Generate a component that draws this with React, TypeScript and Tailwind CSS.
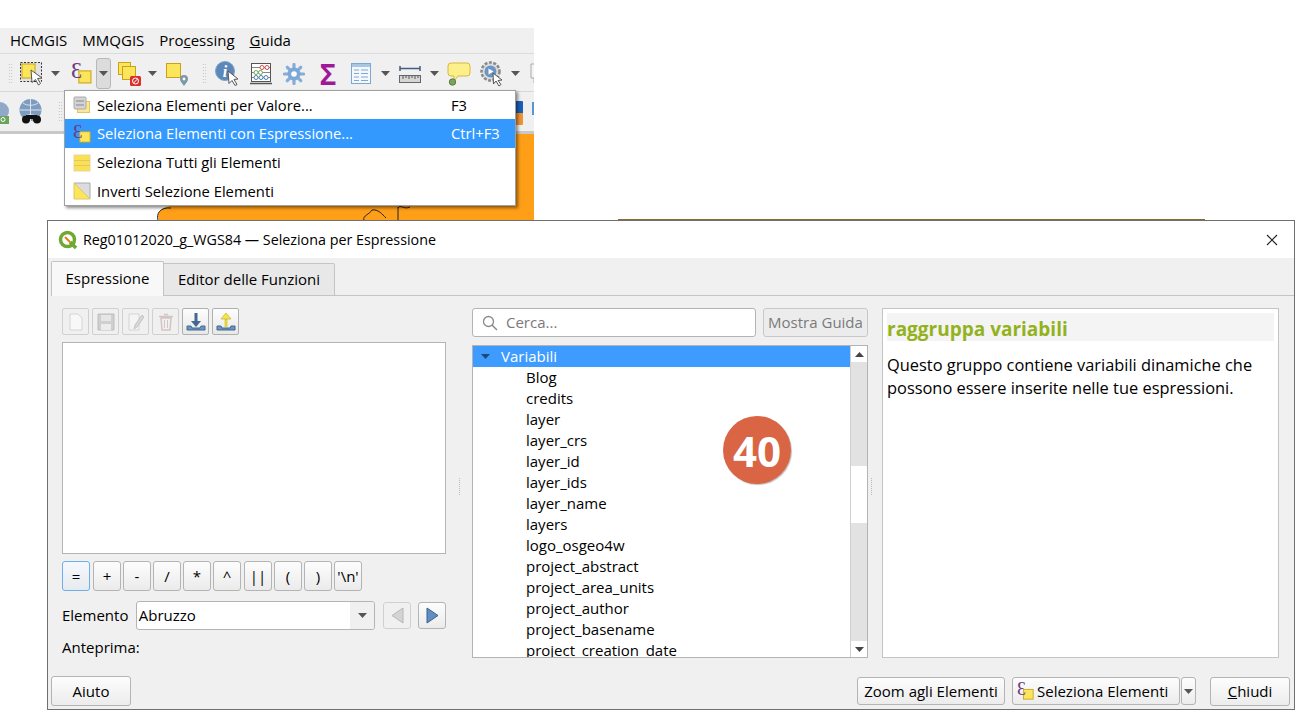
import React from 'react';

const FONT = "font-['Open_Sans','Noto_Sans',sans-serif]";

const Caret = ({ className = 'text-[#555]' }: { className?: string }) => (
  <svg width="9" height="5" viewBox="0 0 9 5" className={className}>
    <path d="M0 0h9L4.500 5z" fill="currentColor" />
  </svg>
);

const Grip = () => (
  <div className="mx-[5px] h-[22px] w-[5px] bg-[radial-gradient(#bbb_0.6px,transparent_0.7px)] bg-[length:2.5px_3px]" />
);

const ExprIcon = ({ size = 20 }: { size?: number }) => (
  <svg width={size} height={size} viewBox="0 0 20 20" className="overflow-visible">
    <rect x="7.500" y="7.500" width="11.500" height="11.500" fill="#fbe55a" stroke="#c9a21a" />
    <text x="0" y="14" fontSize="21" fontFamily="'Liberation Serif','DejaVu Serif',serif" fill="#6b3c85">Ɛ</text>
  </svg>
);

const SelectIcon = () => (
  <svg width="24" height="24" viewBox="0 0 24 24">
    <rect x=".5" y=".5" width="21" height="19" fill="#e3e3e3" stroke="#333" strokeDasharray="2 1.500" />
    <rect x="2" y="2" width="13" height="14" fill="#fbe55a" stroke="#c9a21a" />
    <path d="M11 8l11 8-4.500.5 3 5-2 1.500-3-5.500-3.500 3z" fill="#fff" stroke="#555" />
  </svg>
);

const DeselectIcon = () => (
  <svg width="23" height="24" viewBox="0 0 23 24">
    <rect x=".5" y=".5" width="12" height="12" fill="#fbe55a" stroke="#c9a21a" />
    <rect x="4.500" y="4.500" width="13" height="13" fill="#fbe55a" stroke="#c9a21a" />
    <rect x="12" y="14" width="11" height="10" rx="1.500" fill="#d9302c" />
    <circle cx="17.500" cy="19" r="3" fill="none" stroke="#fff" />
    <path d="M15.500 21l4-4" stroke="#fff" />
  </svg>
);

const LocationIcon = () => (
  <svg width="23" height="24" viewBox="0 0 23 24">
    <rect x=".5" y="1.500" width="14" height="14" fill="#fbe55a" stroke="#c9a21a" />
    <path d="M18 24c-2-3-4-4.500-4-7a4 4 0 018 0c0 2.500-2 4-4 7z" fill="#7a98a8" />
    <circle cx="18" cy="17" r="1.400" fill="#fff" />
  </svg>
);

const InfoIcon = () => (
  <svg width="25" height="25" viewBox="0 0 25 25">
    <circle cx="10" cy="10" r="9.500" fill="#5c88b8" stroke="#7fa3c9" />
    <text x="10" y="15.500" textAnchor="middle" fontSize="16" fontWeight="700" fontStyle="italic" fill="#fff" fontFamily="'Liberation Serif',serif">i</text>
    <path d="M13 10l10 8-4 .5 3 5-2 1-3-5-3 3z" fill="#fff" stroke="#555" />
  </svg>
);

const AbacusIcon = () => (
  <svg width="22" height="22" viewBox="0 0 22 22">
    <rect x="1.500" y=".5" width="19" height="18" fill="#fff" stroke="#555" />
    <path d="M0 20.500h22" stroke="#555" strokeWidth="1.500" />
    <path d="M2 4.500h18M2 9.500h18M2 14.500h18" stroke="#888" />
    <circle cx="12" cy="4.500" r="2" fill="#fff" stroke="#cf4a4a" />
    <circle cx="17" cy="4.500" r="2" fill="#fff" stroke="#cf4a4a" />
    <circle cx="6" cy="9.500" r="2" fill="#fff" stroke="#6aa84f" />
    <circle cx="10.500" cy="9.500" r="2" fill="#fff" stroke="#6aa84f" />
    <circle cx="6" cy="14.500" r="2" fill="#fff" stroke="#4a7fb5" />
    <circle cx="11" cy="14.500" r="2" fill="#fff" stroke="#4a7fb5" />
    <circle cx="16" cy="14.500" r="2" fill="#fff" stroke="#4a7fb5" />
  </svg>
);

const GearIcon = () => (
  <svg width="22" height="22" viewBox="0 0 22 22">
    <g stroke="#86acd8" strokeWidth="3.200" strokeLinecap="round">
      <path d="M11 1.500v19M1.500 11h19M4.300 4.300l13.400 13.400M17.700 4.300L4.300 17.700" />
    </g>
    <circle cx="11" cy="11" r="6.500" fill="#7da7d4" />
    <circle cx="11" cy="11" r="2.800" fill="#fff" />
  </svg>
);

const TableIcon = () => (
  <svg width="20" height="21" viewBox="0 0 20 21">
    <rect x=".5" y=".5" width="19" height="20" fill="#f4f8fc" stroke="#7da7d4" />
    <rect x="1" y="1" width="18" height="3" fill="#a9c6e4" />
    <path d="M3 7h5M10 7h7M3 10.500h5M10 10.500h7M3 14h5M10 14h7M3 17.500h5M10 17.500h7" stroke="#7da7d4" />
  </svg>
);

const RulerIcon = () => (
  <svg width="22" height="20" viewBox="0 0 22 20">
    <path d="M1 4.500h20M1 2v5M21 2v5" stroke="#3f5f7f" strokeWidth="1.500" />
    <rect x=".5" y="11.500" width="21" height="7" fill="#d5d5d5" stroke="#666" />
    <path d="M4 12v3M7 12v2M10 12v3M13 12v2M16 12v3M19 12v2" stroke="#555" />
  </svg>
);

const BalloonIcon = () => (
  <svg width="24" height="24" viewBox="0 0 24 24">
    <path d="M4 1h16a3 3 0 013 3v7a3 3 0 01-3 3H11l-4 5v-5H4a3 3 0 01-3-3V4a3 3 0 013-3z" fill="#fdf08a" stroke="#d8b93a" />
    <circle cx="5.500" cy="20" r="3.200" fill="#7aa45a" stroke="#5a7d40" />
  </svg>
);

const PlayGearIcon = () => (
  <svg width="26" height="26" viewBox="0 0 26 26">
    <circle cx="10.500" cy="10.500" r="9" fill="#ddd" stroke="#888" strokeWidth="2.500" strokeDasharray="3 1.500" />
    <circle cx="10.500" cy="10.500" r="6" fill="#6a95c4" />
    <path d="M8.500 7.500l5 3-5 3z" fill="#fff" />
    <path d="M13 12l9 7-4 .5 3 4-2 1.500-3-5-2.500 3z" fill="#fff" stroke="#555" />
  </svg>
);

const ToolBtn = ({ children, active }: { children: React.ReactNode; active?: boolean }) => (
  <div className={`flex h-[27px] w-[27px] items-center justify-center rounded-[2px] border ${active ? 'border-[#b0b0b0] bg-gradient-to-b from-[#fdfdfd] to-[#e8e8e8]' : 'border-[#d0d0d0] bg-[#f0f0f0]'}`}>
    {children}
  </div>
);

const OPS = ['=', '+', '-', '/', '*', '^', '||', '(', ')', "'\\n'"];

const OpBtn = ({ label, first }: { label: string; first?: boolean }) => (
  <div className={`flex h-[30px] w-[28px] items-center justify-center rounded-[3px] border ${first ? 'border-[#6cb0ea] bg-gradient-to-b from-[#f6f9fc] to-[#e6ebf0]' : 'border-[#b4b4b4] bg-gradient-to-b from-[#fdfdfd] to-[#ebebeb]'}`}>
    {label}
  </div>
);

const BottomBtn = ({ children, className = '' }: { children: React.ReactNode; className?: string }) => (
  <div className={`flex items-center justify-center rounded-[3px] border border-[#b4b4b4] bg-gradient-to-b from-[#fdfdfd] to-[#ececec] ${className}`}>
    {children}
  </div>
);

const VARS = ['Blog', 'credits', 'layer', 'layer_crs', 'layer_id', 'layer_ids', 'layer_name', 'layers', 'logo_osgeo4w', 'project_abstract', 'project_area_units', 'project_author', 'project_basename', 'project_creation_date'];

const MenuRow = ({ icon, label, keys, active }: { icon: React.ReactNode; label: string; keys?: string; active?: boolean }) => (
  <div className={`flex h-[29px] items-center first:h-[28px] last:h-[28px] ${active ? 'bg-[#3399ff] text-white' : ''}`}>
    <div className="flex w-[32px] justify-center pl-[1px]">{icon}</div>
    <span className="w-[354px] whitespace-nowrap">{label}</span>
    <span>{keys}</span>
  </div>
);

export default function App() {
  return (
    <div className={`relative h-[720px] w-[1297px] overflow-hidden bg-white text-[15px] text-black ${FONT}`}>
      {/* main QGIS window behind the dialog */}
      <div className="mt-[28px] w-[534px]">
        <div className="flex h-[26px] items-center gap-[15px] border-b border-[#dcdcdc] bg-[#f0f0f0] pl-[10px]">
          <span>HCMGIS</span>
          <span>MMQGIS</span>
          <span>Pro<u>c</u>essing</span>
          <span><u>G</u>uida</span>
        </div>
        <div className="flex h-[38px] items-center overflow-hidden border-b border-[#d8d8d8] bg-[#f0f0f0] pl-[3px] pt-[2px] [&>*]:shrink-0">
          <Grip />
          <div className="ml-[2px]"><SelectIcon /></div>
          <div className="ml-[7px]"><Caret /></div>
          <div className="ml-[11px]"><ExprIcon size={21} /></div>
          <div className="ml-[4px] flex h-[31px] w-[15px] items-center justify-center rounded-[3px] border border-[#b8b8b8] bg-[#dcdcdc]"><Caret /></div>
          <div className="ml-[7px]"><DeselectIcon /></div>
          <div className="ml-[7px]"><Caret /></div>
          <div className="ml-[9px]"><LocationIcon /></div>
          <div className="ml-[8px]"><Grip /></div>
          <div className="ml-[3px]"><InfoIcon /></div>
          <div className="ml-[10px]"><AbacusIcon /></div>
          <div className="ml-[11px]"><GearIcon /></div>
          <div className="ml-[12px] h-[34px] w-[22px] text-center text-[28px] font-bold leading-[34px] text-[#a0189a]">Σ</div>
          <div className="ml-[12px]"><TableIcon /></div>
          <div className="ml-[10px]"><Caret /></div>
          <div className="ml-[9px]"><RulerIcon /></div>
          <div className="ml-[9px]"><Caret /></div>
          <div className="ml-[8px]"><BalloonIcon /></div>
          <div className="ml-[9px]"><PlayGearIcon /></div>
          <div className="ml-[5px]"><Caret /></div>
          <svg width="14" height="24" viewBox="0 0 14 24" className="ml-[10px]">
            <path d="M1 2h14v14H8l-4 5v-5H1z" fill="#f4f4f4" stroke="#aaa" />
          </svg>
        </div>
        <div className="relative flex h-[42px] items-center overflow-hidden border-b-[3px] border-[#c8c8c8] bg-[#f0f0f0]">
          <svg width="10" height="24" viewBox="0 0 10 24" className="shrink-0">
            <circle cx="0" cy="11" r="9" fill="#8faac8" />
            <rect x="0" y="16" width="9" height="8" fill="#6aa35a" />
            <circle cx="3" cy="19.500" r="2" fill="none" stroke="#fff" />
          </svg>
          <svg width="25" height="25" viewBox="0 0 25 25" className="ml-[8px] shrink-0">
            <circle cx="12.500" cy="11" r="11" fill="#7d9cc0" />
            <path d="M2 11h21M12.500 0v22M5 4c4 3 11 3 15 0M5 18c4-3 11-3 15 0" stroke="#dbe5f0" fill="none" />
            <circle cx="8" cy="20.500" r="4" fill="#111" />
            <circle cx="19" cy="20.500" r="4" fill="#111" />
            <rect x="8" y="16" width="11" height="4" fill="#111" />
          </svg>
          <div className="ml-[10px]"><Grip /></div>
          <div className="absolute left-[515px] top-[9px] h-[24px] w-[8px] rounded-[1px] bg-gradient-to-b from-[#1c5fb8] from-50% to-[#ee9433] to-50%" />
          <div className="absolute left-[532px] top-[10px] h-[13px] w-[2px] bg-[#5b94d0]" />
        </div>
        {/* canvas */}
        <div className="h-[86px] bg-white">
          <svg width="534" height="86" viewBox="0 0 534 86" className="block">
            <path d="M159 86C156 80 160 73 171 72H516V0H534V86z" fill="#ff9e17" />
            <path d="M158 86C156 80 160 73 171 74M364 86C362 82 370 80 372 76C378 75 382 80 386 84M398 86V73M398 74C400 70 404 76 410 73" stroke="#222" fill="none" />
          </svg>
        </div>
      </div>

      {/* edge of the map behind the dialog */}
      <div className="absolute left-[618px] top-[219px] h-[1px] w-[587px] bg-[#8a6a30]" />

      {/* dropdown menu */}
      <div className="absolute left-[64px] top-[90px] w-[452px] border border-[#a0a0a0] bg-white text-[14.75px] shadow-[2px_2px_3px_rgba(0,0,0,0.45)]">
        <MenuRow
          label="Seleziona Elementi per Valore..."
          keys="F3"
          icon={
            <svg width="18" height="18" viewBox="0 0 18 18">
              <rect x="4.500" y="5.500" width="12" height="11" fill="#fbe79a" stroke="#e0c860" />
              <rect x="1" y="1" width="12" height="12" rx="1" fill="#d4d4d4" stroke="#aaa" />
              <path d="M3 5h8M3 9h8" stroke="#888" />
            </svg>
          }
        />
        <MenuRow active label="Seleziona Elementi con Espressione..." keys="Ctrl+F3" icon={<ExprIcon size={18} />} />
        <MenuRow
          label="Seleziona Tutti gli Elementi"
          icon={
            <svg width="18" height="18" viewBox="0 0 18 18">
              <rect x="1" y="1" width="16" height="16" fill="#fbe055" stroke="#e6d79a" />
              <path d="M1 6.500h16M1 11.500h16" stroke="#e0c860" />
            </svg>
          }
        />
        <MenuRow
          label="Inverti Selezione Elementi"
          icon={
            <svg width="18" height="18" viewBox="0 0 18 18">
              <path d="M1 1h16v16z" fill="#dcdcdc" stroke="#aaa" />
              <path d="M1 1l16 16H1z" fill="#fbe55a" stroke="#e0c860" />
            </svg>
          }
        />
      </div>

      {/* expression dialog */}
      <div className="absolute left-[47px] top-[220px] flex h-[490px] w-[1248px] flex-col border border-[#707070] bg-[#f0f0f0]">
        <div className="flex h-[37px] shrink-0 items-center bg-white pl-[10px] pr-[16px] text-[14.3px]">
          <svg width="20" height="20" viewBox="0 0 20 20" className="mr-[5px]">
            <circle cx="9.500" cy="9.500" r="7" fill="none" stroke="#6fa832" strokeWidth="3.500" />
            <path d="M12 12l6 6" stroke="#6fa832" strokeWidth="3.500" />
            <path d="M7 7l5 5" stroke="#ee7913" strokeWidth="2" />
          </svg>
          <span>Reg01012020_g_WGS84 — Seleziona per Espressione</span>
          <svg width="12" height="12" viewBox="0 0 12 12" className="ml-auto">
            <path d="M1 1l10 10M11 1L1 11" stroke="#222" strokeWidth="1.100" />
          </svg>
        </div>

        <div className="flex h-[38px] shrink-0 items-end pl-[3px]">
          <div className="z-10 flex h-[35px] w-[113px] items-center justify-center rounded-t-[2px] border border-b-0 border-[#c4c4c4] bg-[#f8f8f8] pb-[2px]">Espressione</div>
          <div className="flex h-[33px] w-[171px] items-center justify-center rounded-tr-[2px] border border-l-0 border-[#c4c4c4] bg-[#e8e8e8]">Editor delle Funzioni</div>
          <div className="flex-1 border-b border-[#c4c4c4]" />
        </div>

        <div className="flex min-h-0 flex-1 pl-[14px] pr-[14px] pt-[12px]">
          {/* left column */}
          <div className="w-[384px] shrink-0">
            <div className="flex gap-[3px]">
              <ToolBtn>
                <svg width="14" height="18" viewBox="0 0 14 18"><path d="M1 1h8l4 4v12H1z" fill="#f8f8f8" stroke="#d4d4d4" /></svg>
              </ToolBtn>
              <ToolBtn>
                <svg width="18" height="18" viewBox="0 0 18 18"><path d="M1 1h16v16H1z" fill="#cfcfcf" stroke="#bdbdbd" /><rect x="4" y="2" width="10" height="6" fill="#e6e6e6" /><rect x="4" y="11" width="10" height="6" fill="#ececec" /></svg>
              </ToolBtn>
              <ToolBtn>
                <svg width="18" height="18" viewBox="0 0 18 18"><path d="M2 1h10v16H2z" fill="#f4f4f4" stroke="#d4d4d4" /><path d="M15 2l2 2-7 10-3 2 1-4z" fill="#d8d8d8" stroke="#c4c4c4" /></svg>
              </ToolBtn>
              <ToolBtn>
                <svg width="16" height="18" viewBox="0 0 16 18"><path d="M3 5h10l-1 12H4zM1 3.500h14M6 1.500h4" fill="none" stroke="#d4c4c4" strokeWidth="1.500" /><path d="M6.500 7v8M9.500 7v8" stroke="#d4c4c4" /></svg>
              </ToolBtn>
              <ToolBtn active>
                <svg width="20" height="20" viewBox="0 0 20 20"><path d="M10 1v9" stroke="#44688f" strokeWidth="3" /><path d="M5 9h10l-5 6z" fill="#44688f" /><path d="M1 14h4l1 2h8l1-2h4v4H1z" fill="#6b94bf" stroke="#44688f" /></svg>
              </ToolBtn>
              <ToolBtn active>
                <svg width="20" height="20" viewBox="0 0 20 20"><path d="M10 15V6" stroke="#e3d43a" strokeWidth="3" /><path d="M5 7h10l-5-6z" fill="#f5e64a" stroke="#b8a82a" strokeWidth=".6" /><path d="M1 14h4l1 2h8l1-2h4v4H1z" fill="#6b94bf" stroke="#44688f" /></svg>
              </ToolBtn>
            </div>
            <div className="mt-[7px] h-[212px] border border-[#b4b4b4] bg-white" />
            <div className="mt-[7px] flex gap-[2px]">
              <div className="mr-[1px]"><OpBtn label={OPS[0]} first /></div>
              {OPS.slice(1, 6).map((op) => (
                <OpBtn key={op} label={op} />
              ))}
              <div className="ml-[1px] flex gap-[2px]">
                {OPS.slice(6).map((op) => (
                  <OpBtn key={op} label={op} />
                ))}
              </div>
            </div>
            <div className="mt-[9px] flex h-[30px] items-center">
              <span className="w-[74px]">Elemento</span>
              <div className="flex h-[29px] w-[240px] items-center rounded-[3px] border border-[#b4b4b4] bg-white pl-[2px]">
                Abruzzo
                <div className="ml-auto flex h-full w-[24px] items-center justify-center rounded-r-[3px] bg-[#f0f0f0]"><Caret /></div>
              </div>
              <div className="ml-[8px] flex h-[27px] w-[28px] items-center justify-center rounded-[3px] border border-[#d0d0d0]">
                <svg width="13" height="17" viewBox="0 0 13 17"><path d="M12 1v15L1 8.500z" fill="#d4d4d4" stroke="#b8b8b8" /></svg>
              </div>
              <div className="ml-[7px] flex h-[27px] w-[28px] items-center justify-center rounded-[3px] border border-[#b4b4b4] bg-gradient-to-b from-[#fdfdfd] to-[#ebebeb]">
                <svg width="13" height="17" viewBox="0 0 13 17"><path d="M1 1v15l11-7.500z" fill="#5f8fc2" stroke="#3f618a" /></svg>
              </div>
            </div>
            <div className="mt-[7px] leading-[20px]">Anteprima:</div>
          </div>

          {/* splitter */}
          <div className="flex w-[26px] shrink-0 items-center justify-center pl-[2px]">
            <div className="mb-[12px] h-[17px] w-[2px] border-l border-dotted border-[#bbb]" />
          </div>

          {/* middle column */}
          <div className="flex w-[396px] shrink-0 flex-col">
            <div className="flex gap-[7px]">
              <div className="flex h-[29px] w-[284px] items-center rounded-[3px] border border-[#b4b4b4] bg-white pl-[9px] text-[#7a7a7a]">
                <svg width="16" height="16" viewBox="0 0 16 16" className="mr-[8px]">
                  <circle cx="6.500" cy="6.500" r="5" fill="none" stroke="#8a8a8a" strokeWidth="1.300" />
                  <path d="M10 10l5 5" stroke="#8a8a8a" strokeWidth="1.500" />
                </svg>
                Cerca...
              </div>
              <div className="flex h-[29px] w-[105px] items-center justify-center whitespace-nowrap rounded-[3px] border border-[#c8c8c8] bg-[#ececec] text-[#7a7a7a]">Mostra Guida</div>
            </div>
            <div className="mt-[8px] flex h-[313px] overflow-hidden border border-[#b4b4b4] bg-white">
              <div className="min-w-0 flex-1">
                <div className="flex h-[21px] items-center bg-[#3e9bff] text-white">
                  <div className="flex w-[28px] justify-center pr-[3px]"><Caret className="text-[#1e4a7a]" /></div>
                  <span>Variabili</span>
                </div>
                {VARS.map((v) => (
                  <div key={v} className="h-[21px] whitespace-nowrap pl-[53px] leading-[21px]">{v}</div>
                ))}
              </div>
              <div className="flex w-[17px] shrink-0 flex-col border-l border-[#d0d0d0] bg-white">
                <div className="flex h-[16px] items-center justify-center"><Caret className="rotate-180 text-[#444]" /></div>
                <div className="h-[104px] bg-[#e2e2e2]" />
                <div className="flex-1" />
                <div className="h-[118px] bg-[#e2e2e2]" />
                <div className="flex h-[16px] items-center justify-center"><Caret className="text-[#444]" /></div>
              </div>
            </div>
          </div>

          {/* splitter */}
          <div className="flex w-[14px] shrink-0 items-center pl-[3px]">
            <div className="mb-[12px] h-[17px] w-[2px] border-l border-dotted border-[#bbb]" />
          </div>

          {/* help panel */}
          <div className="h-[350px] w-[397px] shrink-0 border border-[#c4c4c4] bg-white px-[4px] pt-[4px] text-[16.4px] leading-[23px]">
            <div className="flex h-[28px] items-center bg-[#f4f4f4] pt-[4px] text-[19px] font-bold text-[#93b21c]">raggruppa variabili</div>
            <p className="mt-[12px] whitespace-nowrap">Questo gruppo contiene variabili dinamiche che<br />possono essere inserite nelle tue espressioni.</p>
          </div>
        </div>

        {/* bottom buttons */}
        <div className="flex h-[33px] shrink-0 items-start pl-[3px] pr-[4px]">
          <BottomBtn className="h-[30px] w-[80px]">Aiuto</BottomBtn>
          <BottomBtn className="ml-auto mt-[1px] h-[28px] w-[148px] whitespace-nowrap">Zoom agli Elementi</BottomBtn>
          <BottomBtn className="ml-[7px] mt-[1px] h-[28px] w-[168px] justify-start whitespace-nowrap pl-[4px]">
            <ExprIcon size={17} />
            <span className="ml-[3px]">Seleziona Elementi</span>
          </BottomBtn>
          <BottomBtn className="ml-[1px] mt-[1px] h-[28px] w-[15px]"><Caret /></BottomBtn>
          <BottomBtn className="ml-[14px] mt-[1px] h-[29px] w-[80px]"><span><u>C</u>hiudi</span></BottomBtn>
        </div>
      </div>

      {/* step badge */}
      <div className="absolute left-[723px] top-[416px] flex h-[68px] w-[68px] items-center justify-center rounded-full bg-[#d96544] text-[42px] font-bold text-white shadow-[1px_1px_1px_rgba(0,0,0,0.25)]">40</div>
    </div>
  );
}
